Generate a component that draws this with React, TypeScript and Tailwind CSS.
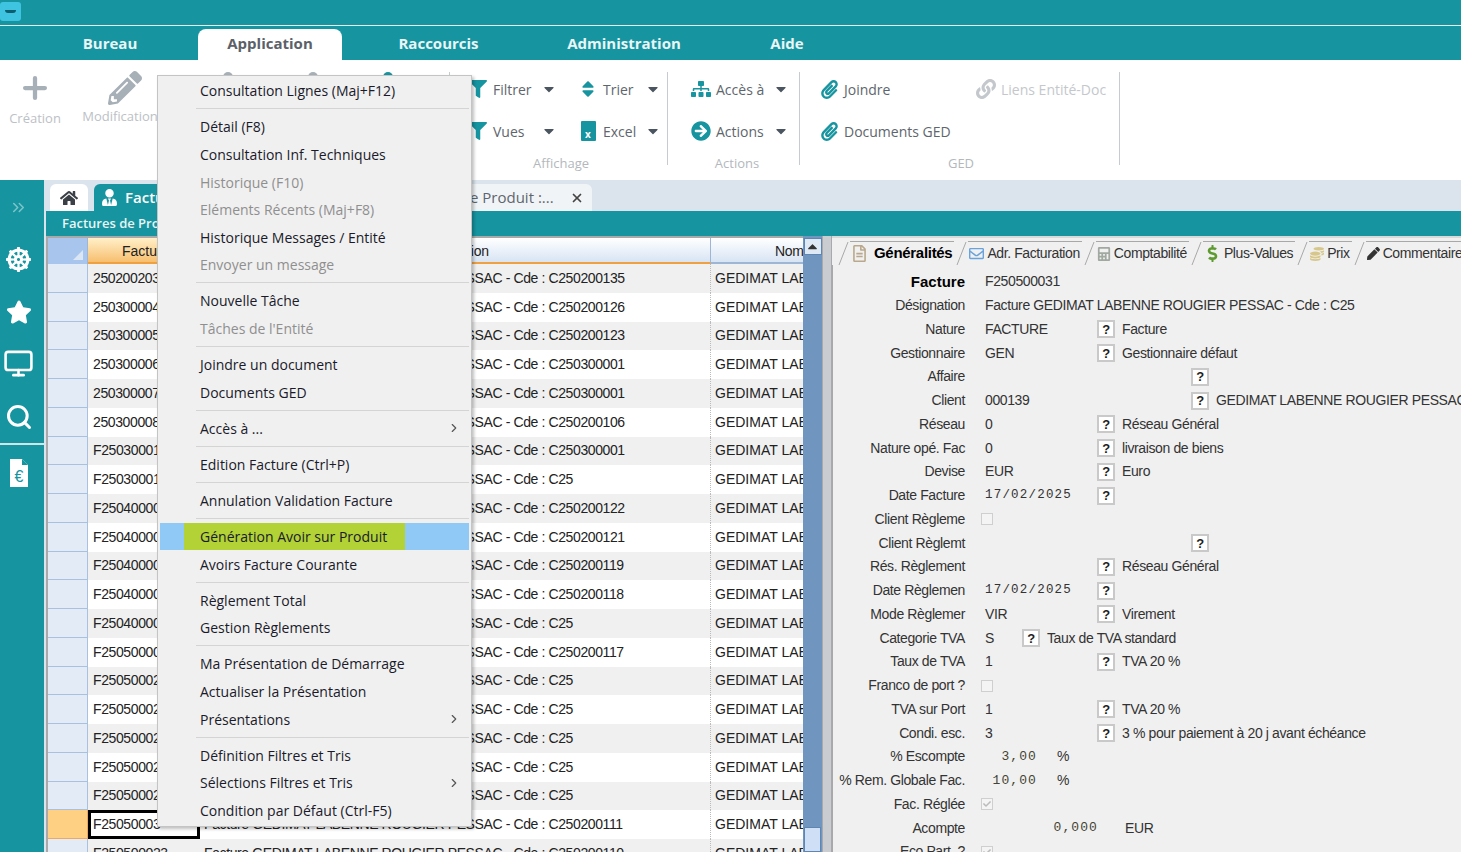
import { FaPencilAlt, FaFilter, FaSitemap, FaPaperclip, FaArrowCircleRight, FaSort, FaLink, FaHome, FaStar, FaDharmachakra, FaCaretDown, FaCaretUp, FaDollarSign, FaPen, FaRegEnvelope, FaCalculator, FaRegFileAlt, FaCoins, FaUserTie, FaCheck } from "react-icons/fa";
import { Plus, Monitor, Search, ChevronRight, ChevronsRight, X } from "lucide-react";

const teal = "bg-[#16949f]";

type MenuEntry = { label?: string; off?: boolean; arrow?: boolean; hot?: boolean; sep?: boolean };

const menu: MenuEntry[] = [
  { label: "Consultation Lignes (Maj+F12)" },
  { sep: true },
  { label: "Détail (F8)" },
  { label: "Consultation Inf. Techniques" },
  { label: "Historique (F10)", off: true },
  { label: "Eléments Récents (Maj+F8)", off: true },
  { label: "Historique Messages / Entité" },
  { label: "Envoyer un message", off: true },
  { sep: true },
  { label: "Nouvelle Tâche" },
  { label: "Tâches de l'Entité", off: true },
  { sep: true },
  { label: "Joindre un document" },
  { label: "Documents GED" },
  { sep: true },
  { label: "Accès à ...", arrow: true },
  { sep: true },
  { label: "Edition Facture (Ctrl+P)" },
  { sep: true },
  { label: "Annulation Validation Facture" },
  { sep: true },
  { label: "Génération Avoir sur Produit", hot: true },
  { label: "Avoirs Facture Courante" },
  { sep: true },
  { label: "Règlement Total" },
  { label: "Gestion Règlements" },
  { sep: true },
  { label: "Ma Présentation de Démarrage" },
  { label: "Actualiser la Présentation" },
  { label: "Présentations", arrow: true },
  { sep: true },
  { label: "Définition Filtres et Tris" },
  { label: "Sélections Filtres et Tris", arrow: true },
  { label: "Condition par Défaut (Ctrl-F5)" },
];

const rows = [
  ["250200203", "C250200135"],
  ["250300004", "C250200126"],
  ["250300005", "C250200123"],
  ["250300006", "C250300001"],
  ["250300007", "C250300001"],
  ["250300008", "C250200106"],
  ["F25030001", "C250300001"],
  ["F25030001", "C25"],
  ["F25040000", "C250200122"],
  ["F25040000", "C250200121"],
  ["F25040000", "C250200119"],
  ["F25040000", "C250200118"],
  ["F25040000", "C25"],
  ["F25050000", "C250200117"],
  ["F25050002", "C25"],
  ["F25050002", "C25"],
  ["F25050002", "C25"],
  ["F25050002", "C25"],
  ["F25050002", "C25"],
  ["F25050003", "C250200111"],
  ["F250500023", "C250200110"],
];

type FormRow = {
  label: string;
  bold?: boolean;
  value?: string;
  mono?: boolean;
  help?: "near" | "mid" | "far";
  text?: string;
  check?: "empty" | "checked";
  num?: string;
  unit?: string;
};

const form: FormRow[] = [
  { label: "Facture", bold: true, value: "F250500031" },
  { label: "Désignation", value: "Facture GEDIMAT LABENNE ROUGIER PESSAC - Cde : C25" },
  { label: "Nature", value: "FACTURE", help: "mid", text: "Facture" },
  { label: "Gestionnaire", value: "GEN", help: "mid", text: "Gestionnaire défaut" },
  { label: "Affaire", help: "far" },
  { label: "Client", value: "000139", help: "far", text: "GEDIMAT LABENNE ROUGIER PESSAC" },
  { label: "Réseau", value: "0", help: "mid", text: "Réseau Général" },
  { label: "Nature opé. Fac", value: "0", help: "mid", text: "livraison de biens" },
  { label: "Devise", value: "EUR", help: "mid", text: "Euro" },
  { label: "Date Facture", value: "17/02/2025", mono: true, help: "mid" },
  { label: "Client Règleme", check: "empty" },
  { label: "Client Règlemt", help: "far" },
  { label: "Rés. Règlement", help: "mid", text: "Réseau Général" },
  { label: "Date Règlemen", value: "17/02/2025", mono: true, help: "mid" },
  { label: "Mode Règlemer", value: "VIR", help: "mid", text: "Virement" },
  { label: "Categorie TVA", value: "S", help: "near", text: "Taux de TVA standard" },
  { label: "Taux de TVA", value: "1", help: "mid", text: "TVA 20 %" },
  { label: "Franco de port ?", check: "empty" },
  { label: "TVA sur Port", value: "1", help: "mid", text: "TVA 20 %" },
  { label: "Condi. esc.", value: "3", help: "mid", text: "3 % pour paiement à 20 j avant échéance" },
  { label: "% Escompte", num: "3,00", unit: "%" },
  { label: "% Rem. Globale Fac.", num: "10,00", unit: "%" },
  { label: "Fac. Réglée", check: "checked" },
  { label: "Acompte", num: "0,000", unit: "EUR" },
  { label: "Eco Part. ?", check: "checked" },
];

function RibbonBtn({ icon, label, caret, muted, className }: { icon: React.ReactNode; label: string; caret?: boolean; muted?: boolean; className: string }) {
  return (
    <div className={`flex items-center h-[24px] ${className}`}>
      <span className="flex w-[27px] shrink-0 justify-center pr-[3px]">{icon}</span>
      <span className={`text-[14px] whitespace-nowrap ${muted ? "text-[#c4c8cc]" : "text-[#5e666d]"}`}>{label}</span>
      {caret && <FaCaretDown className="ml-auto text-[#4b5560] text-[16px]" />}
    </div>
  );
}

function Ribbon() {
  return (
    <div className="flex h-[120px] bg-white shrink-0 font-['Open_Sans',sans-serif] overflow-hidden">
      <div className="flex w-[70px] flex-col items-center pt-[11px] shrink-0">
        <Plus size={34} strokeWidth={3} className="text-[#a7afb7]" />
        <span className="mt-[4px] text-[13px] text-[#bcc1c6]">Création</span>
      </div>
      <div className="flex w-[100px] flex-col items-center pt-[11px] shrink-0">
        <FaPencilAlt className="ml-[10px] text-[#a7afb7] text-[34px]" />
        <span className="mt-[2px] text-[13px] text-[#bcc1c6] whitespace-nowrap">Modification</span>
      </div>
      <div className="flex w-[296px] shrink-0 pt-[12px]">
        <span className="ml-[53px] h-[10px] w-[10px] rounded-full bg-[#a7afb7]" />
        <span className="ml-[75px] h-[10px] w-[10px] rounded-full bg-[#a7afb7]" />
        <span className="ml-[65px] h-[10px] w-[10px] rounded-full bg-[#16949f]" />
        <span className="ml-[56px] h-[93px] w-px bg-[#c6cbd0]" />
      </div>

      <div className="flex w-[201px] shrink-0 flex-col pt-[17px]">
        <div className="flex gap-[19px]">
          <RibbonBtn icon={<FaFilter className="text-[#16949f] text-[18px]" />} label="Filtrer" caret className="w-[91px]" />
          <RibbonBtn icon={<FaSort className="text-[#16949f] text-[20px]" />} label="Trier" caret className="w-[85px]" />
        </div>
        <div className="mt-[18px] flex gap-[19px]">
          <RibbonBtn icon={<FaFilter className="text-[#16949f] text-[18px]" />} label="Vues" caret className="w-[91px]" />
          <RibbonBtn icon={<span className="flex h-[20px] w-[15px] items-end justify-center rounded-[1px] bg-[#16949f] text-[10px] font-bold leading-[14px] text-white">x</span>} label="Excel" caret className="w-[85px]" />
        </div>
        <div className="mt-[11px] pr-[11px] text-center text-[13px] text-[#b3b8bd]">Affichage</div>
      </div>
      <div className="mt-[12px] h-[93px] w-px shrink-0 bg-[#c6cbd0]" />

      <div className="flex w-[131px] shrink-0 flex-col pt-[17px] pl-[21px]">
        <RibbonBtn icon={<FaSitemap className="text-[#16949f] text-[20px]" />} label="Accès à" caret className="w-[100px]" />
        <div className="mt-[18px]"><RibbonBtn icon={<FaArrowCircleRight className="text-[#16949f] text-[20px]" />} label="Actions" caret className="w-[100px]" /></div>
        <div className="mt-[11px] pr-[14px] text-center text-[13px] text-[#b3b8bd]">Actions</div>
      </div>
      <div className="mt-[12px] h-[93px] w-px shrink-0 bg-[#c6cbd0]" />

      <div className="flex w-[319px] shrink-0 flex-col pt-[17px] pl-[17px]">
        <div className="flex">
          <div className="w-[157px]"><RibbonBtn icon={<FaPaperclip className="text-[#16949f] text-[19px]" />} label="Joindre" className="w-[100px]" /></div>
          <RibbonBtn icon={<FaLink className="text-[#c4c8cc] text-[20px]" />} label="Liens Entité-Doc" muted className="w-[140px]" />
        </div>
        <div className="mt-[18px]"><RibbonBtn icon={<FaPaperclip className="text-[#16949f] text-[19px]" />} label="Documents GED" className="w-[150px]" /></div>
        <div className="mt-[11px] pr-[14px] text-center text-[13px] text-[#b3b8bd]">GED</div>
      </div>
      <div className="mt-[12px] h-[93px] w-px shrink-0 bg-[#c6cbd0]" />
    </div>
  );
}

function Sidebar() {
  return (
    <div className={`flex w-[44px] shrink-0 flex-col items-center pr-[7px] ${teal}`}>
      <ChevronsRight className="mt-[18px] text-[#7cc4cb]" size={19} />
      <FaDharmachakra className="mt-[30px] text-white text-[25px]" />
      <FaStar className="mt-[27px] text-white text-[26px]" />
      <Monitor className="mt-[23px] text-white" size={31} />
      <Search className="mt-[24px] text-white" size={28} strokeWidth={2.6} />
      <div className="-mr-[7px] mt-[12px] h-[2px] self-stretch bg-[#cfe6e9]" />
      <svg className="mt-[14px]" width="20" height="28" viewBox="0 0 20 28">
        <path d="M1 0h12l6 6v22H1z" fill="#fff" />
        <path d="M13 0v6h6z" fill="#16949f" />
        <text x="10" y="23" textAnchor="middle" fontSize="16" fontFamily="Liberation Sans" fill="#16949f">€</text>
      </svg>
    </div>
  );
}

function Grid() {
  return (
    <div className="flex w-[757px] shrink-0 flex-col overflow-hidden border-l-2 border-t-2 border-[#a9a9a9] bg-white font-['Liberation_Sans',sans-serif] text-[14px] text-[#222]">
      <div className="flex h-[26px] shrink-0">
        <div className="flex w-[40px] shrink-0 items-end justify-end border-r border-[#9db6d6] bg-[#a8c5ee] p-[4px]">
          <span className="h-0 w-0 border-b-[10px] border-l-[10px] border-b-[#dbe6f5] border-l-transparent" />
        </div>
        <div className="w-[112px] shrink-0 border-b-2 border-[#f0a040] bg-gradient-to-b from-[#fff0c8] to-[#f6bf6e] pl-[34px] pt-[3px]">Facture</div>
        <div className="w-[511px] shrink-0 overflow-hidden border-b-2 border-[#f0a040] border-r border-r-[#9db6d6] bg-gradient-to-b from-white to-[#d8e4f4] pt-[3px] pl-[218px] tracking-[-0.3px]">Désignation</div>
        <div className="w-[92px] shrink-0 overflow-hidden border-b-2 border-[#9db6d6] bg-gradient-to-b from-white to-[#d8e4f4] pt-[3px] pl-[64px] whitespace-nowrap tracking-[-0.3px]">Nom</div>
      </div>
      {rows.map((r, i) => {
        const sel = i === 19;
        return (
          <div key={i} className={`flex h-[28.75px] shrink-0 items-center ${i % 2 === 0 && !sel ? "bg-[#f0f0f0]" : "bg-white"}`}>
            <div className={`h-full w-[40px] shrink-0 border-b border-r ${sel ? "bg-[#fdd084] border-[#f0a860]" : "bg-[#e3ebf7] border-[#a9c0de]"}`} />
            <div className={`flex h-full w-[112px] shrink-0 items-center overflow-hidden whitespace-nowrap tracking-[-0.39px] ${sel ? "border-[3px] border-black bg-white pl-[2px]" : "pl-[5px]"}`}>{r[0]}</div>
            <div className="flex h-full w-[511px] shrink-0 items-center overflow-hidden whitespace-nowrap border-r border-dotted border-[#bbb] pl-[4px] tracking-[-0.39px]">
              Facture GEDIMAT LABENNE ROUGIER PESSAC - Cde : {r[1]}
            </div>
            <div className="flex h-full w-[92px] shrink-0 items-center overflow-hidden whitespace-nowrap pl-[4px]">GEDIMAT LABENNE</div>
          </div>
        );
      })}
    </div>
  );
}

function Scrollbar() {
  return (
    <div className="flex w-[19px] shrink-0 flex-col items-center bg-[#7096c0] pt-[2px]">
      <div className="flex h-[20px] w-[18px] items-center justify-center border border-[#5f86b2] bg-[#dfe9f6]">
        <FaCaretUp className="text-[15px] text-[#333]" />
      </div>
      <div className="mt-[572px] h-[30px] w-[17px] border border-[#5f86b2] bg-[#cfe0f6]" />
    </div>
  );
}

function TabEdge() {
  return (
    <svg width="14" height="24" viewBox="0 0 14 24" className="shrink-0">
      <path d="M3 24L12 1" stroke="#a8a8a8" fill="none" />
    </svg>
  );
}

function DetailTab({ icon, label, active }: { icon: React.ReactNode; label: string; active?: boolean }) {
  return (
    <div className="flex h-[24px] items-center">
      <TabEdge />
      <div className="flex h-full items-center gap-[3px] border-t border-[#a8a8a8] pl-[1px] pr-[2px]">
        {icon}
        <span className={`whitespace-nowrap ${active ? "pl-[3px] text-[15px] font-bold tracking-[-0.3px] text-black" : "tracking-[-0.4px]"}`}>{label}</span>
      </div>
    </div>
  );
}

function HelpBtn() {
  return (
    <span className="flex h-[18px] w-[18px] shrink-0 items-center justify-center border-2 border-[#c9c9c9] bg-white text-[13px] font-bold leading-none text-[#222]">?</span>
  );
}

function Check({ on }: { on: boolean }) {
  return (
    <span className="-ml-[4px] flex h-[12px] w-[12px] items-center justify-center border border-[#cfcfcf] bg-[#f4f4f4]">
      {on && <FaCheck className="text-[8px] text-[#bbb]" />}
    </span>
  );
}

function Field({ row }: { row: FormRow }) {
  const valueWidth = row.help === "far" ? "w-[206px]" : row.help === "near" ? "w-[37px]" : "w-[112px]";
  return (
    <div className="flex h-[23.75px] shrink-0 items-center whitespace-nowrap tracking-[-0.38px]">
      <span className={`w-[132px] shrink-0 text-right ${row.bold ? "text-[15px] font-bold tracking-normal text-black" : ""}`}>{row.label}</span>
      <span className="w-[20px] shrink-0" />
      {row.value !== undefined || row.help ? (
        <span className={`shrink-0 ${row.value && !row.help ? "" : valueWidth} ${row.mono ? "font-['Liberation_Mono',monospace] text-[12.5px] tracking-[1.2px]" : ""}`}>{row.value}</span>
      ) : null}
      {row.help && <HelpBtn />}
      {row.text && <span className="ml-[7px]">{row.text}</span>}
      {row.check && <Check on={row.check === "checked"} />}
      {row.num && (
        <>
          <span className={`shrink-0 text-right font-['Liberation_Mono',monospace] text-[13px] tracking-[1.1px] text-[#443] ${row.unit === "EUR" ? "w-[113px]" : "w-[52px]"}`}>{row.num}</span>
          <span className={row.unit === "EUR" ? "ml-[27px]" : "ml-[20px]"}>{row.unit}</span>
        </>
      )}
    </div>
  );
}

function Detail() {
  return (
    <div className="flex min-w-0 flex-1 flex-col overflow-hidden bg-[#f0f0f0] font-['Liberation_Sans',sans-serif] text-[14px] text-[#333]">
      <div className="flex h-[29px] shrink-0 items-end border-t-2 border-[#d9d9d9] pl-[4px]">
        <DetailTab active icon={<FaRegFileAlt className="text-[17px] text-[#b9a88c]" />} label="Généralités" />
        <DetailTab icon={<FaRegEnvelope className="text-[15px] text-[#6aa2dc]" />} label="Adr. Facturation" />
        <DetailTab icon={<FaCalculator className="text-[14px] text-[#a0a8a0]" />} label="Comptabilité" />
        <DetailTab icon={<FaDollarSign className="text-[17px] text-[#5d9a30]" />} label="Plus-Values" />
        <DetailTab icon={<FaCoins className="text-[14px] text-[#d8c78a]" />} label="Prix" />
        <DetailTab icon={<FaPen className="text-[13px] text-[#333]" />} label="Commentaire" />
      </div>
      <div className="flex flex-col border-l border-[#a8a8a8] pt-[5px]">
        {form.map((r) => (
          <Field key={r.label} row={r} />
        ))}
      </div>
    </div>
  );
}

function ContextMenu() {
  return (
    <div className="absolute left-[157px] top-[75px] z-10 w-[315px] border border-[#c4c4c4] bg-[#f0f0f0] px-[2px] pb-[2px] pt-[1px] font-['Open_Sans',sans-serif] text-[14px] shadow-[2px_2px_3px_rgba(0,0,0,0.25)]">
      {menu.map((m, i) =>
        m.sep ? (
          <div key={i} className="ml-[36px] my-[3.75px] h-px bg-[#d4d4d4]" />
        ) : (
          <div key={i} className={`flex h-[27.6px] items-center pr-[8px] ${m.hot ? "bg-[#90c8f6]" : ""} ${m.off ? "text-[#8f8f8f]" : "text-[#1a1a2a]"}`}>
            <span className={`ml-[24px] flex h-full items-center pl-[16px] ${m.hot ? "w-[221px] bg-[#b2d235]" : ""}`}>{m.label}</span>
            {m.arrow && <ChevronRight size={14} className="ml-auto text-[#555]" />}
          </div>
        )
      )}
    </div>
  );
}

export default function App() {
  return (
    <div className="relative flex h-[852px] w-[1461px] flex-col overflow-hidden bg-[#dbe4ec]">
      <div className={`flex h-[25px] shrink-0 items-start pt-[2px] ${teal}`}>
        <div className="flex h-[19px] w-[21px] items-center justify-center rounded-[3px] bg-[#3ec4e0]">
          <span className="h-[3px] w-[11px] rounded-b-full bg-[#0d5f70]" />
        </div>
      </div>
      <div className="h-px shrink-0 bg-[#e3f1f2]" />
      <div className={`flex h-[34px] shrink-0 items-end font-['Open_Sans',sans-serif] text-[15px] font-bold text-[#e9f5f6] ${teal}`}>
        <div className="flex h-[31px] w-[198px] items-center justify-center pb-[3px] pl-[22px]">Bureau</div>
        <div className="flex h-[31px] w-[144px] items-center justify-center rounded-t-[8px] bg-white pb-[3px] text-[#5b6168]">Application</div>
        <div className="flex h-[31px] w-[193px] items-center justify-center pb-[3px]">Raccourcis</div>
        <div className="flex h-[31px] w-[178px] items-center justify-center pb-[3px]">Administration</div>
        <div className="flex h-[31px] w-[148px] items-center justify-center pb-[3px]">Aide</div>
      </div>

      <Ribbon />

      <div className="flex min-h-0 flex-1">
        <Sidebar />
        <div className="flex min-w-0 flex-1 flex-col pl-[2px]">
          <div className="flex h-[31px] shrink-0 items-end pl-[4px] font-['Open_Sans',sans-serif] text-[15px]">
            <div className="flex h-[27px] w-[38px] items-center justify-center rounded-t-[6px] bg-white">
              <FaHome className="text-[18px] text-[#3a4046]" />
            </div>
            <div className={`ml-[6px] flex h-[27px] w-[370px] items-center gap-[7px] rounded-t-[6px] pl-[7px] font-semibold text-white ${teal}`}>
              <FaUserTie className="text-[17px]" />
              Factures de Produit
            </div>
            <div className="flex h-[27px] w-[128px] items-center rounded-tr-[6px] bg-[#f1f4f7] pl-[6px] text-[#5e666d]">
              e Produit :...
              <X size={14} strokeWidth={3} className="ml-[16px] text-[#444]" />
            </div>
          </div>
          <div className={`flex h-[25px] shrink-0 items-center pl-[16px] font-['Open_Sans',sans-serif] text-[13px] font-semibold text-[#e9f5f6] ${teal}`}>
            Factures de Produit
          </div>
          <div className="flex min-h-0 flex-1 overflow-hidden">
            <Grid />
            <Scrollbar />
            <div className="w-[10px] shrink-0 border-x border-[#a9a9a9] bg-[#c9ccd0]" />
            <Detail />
          </div>
        </div>
      </div>

      <ContextMenu />
    </div>
  );
}
